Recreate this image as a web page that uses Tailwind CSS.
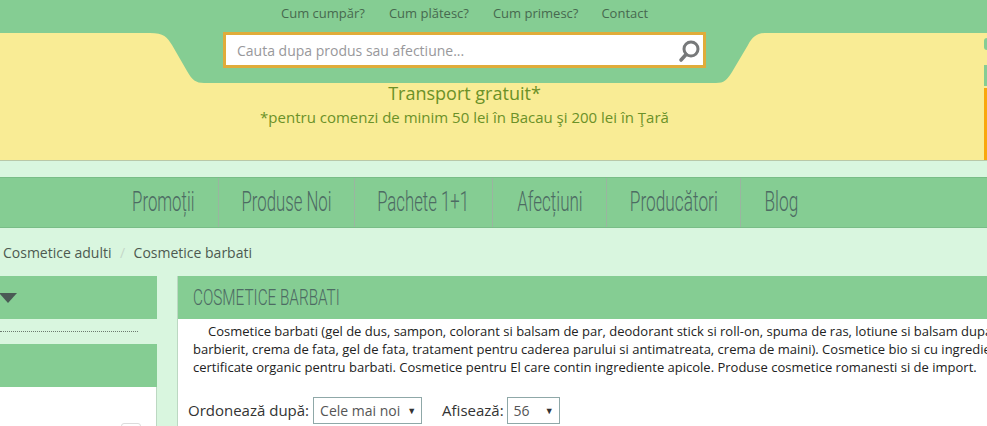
<!DOCTYPE html>
<html lang="en">
<head>
    <meta charset="UTF-8">
    <meta name="viewport" content="width=device-width, initial-scale=1.0">
    <title>Cosmetice barbati</title>
    <script src="https://cdn.jsdelivr.net/npm/@tailwindcss/browser@4"></script>
</head>
<body class="bg-[#d9f6df] h-[426px] w-[987px] overflow-hidden font-['Open_Sans',sans-serif] text-[14px] text-[#333]">
    <!-- Top links -->
    <div class="bg-[#85cd93] h-[33px] pt-[4px] pl-[281px] flex gap-[24px] text-[13px] leading-[18px] text-[#47694f]">
        <a href="#">Cum cumpăr?</a>
        <a href="#">Cum plătesc?</a>
        <a href="#">Cum primesc?</a>
        <a href="#" class="-ml-[1px]">Contact</a>
    </div>

    <!-- Yellow banner with search tab -->
    <div class="relative bg-[#f9ec95] h-[128px] border-b border-[#b9c8a8]">
        <svg class="absolute left-0 top-0" width="987" height="50" viewBox="0 0 987 50">
            <path d="M150 0 C164 0 167 4 172 12 L187 38 C192 47 196 50 204 50 L716 50 C724 50 727 47 732 39 L748 12 C753 3 757 0 767 0 Z" fill="#85cd93"/>
        </svg>
        <div class="absolute left-[984px] top-[5px] w-[3px] h-[12px] bg-[#85cd93] rounded-l-full"></div>
        <div class="absolute left-[984px] top-[32px] w-[3px] h-[21px] bg-[#85cd93]"></div>
        <div class="absolute left-[984px] top-[55px] w-[3px] h-[72px] bg-[#f9a70d]"></div>

        <div class="relative -top-[1px] ml-[223px] w-[483px] h-[36px] bg-white border-[3px] border-[#e0ac3a] flex items-center justify-between pl-[11px] pr-[2px]">
            <span class="text-[14px] text-[#98989b]">Cauta dupa produs sau afectiune...</span>
            <svg width="24" height="26" viewBox="0 0 24 26" fill="none" stroke="#77797a">
                <circle cx="14" cy="12" r="7" stroke-width="3"/>
                <path d="M9 17.5 L4 23" stroke-width="3.6" stroke-linecap="round"/>
            </svg>
        </div>
        <div class="relative mt-[12px] w-[929px] text-center text-[#6b9128]">
            <p class="text-[18px] leading-[25px]">Transport gratuit*</p>
            <p class="text-[15px] leading-[22px]">*pentru comenzi de minim 50 lei în Bacau şi 200 lei în Ţară</p>
        </div>
    </div>

    <!-- Main nav -->
    <nav class="mt-[16px] bg-[#85cd93] h-[51px] border-y border-[#79bd87] pl-[108px] flex font-['Roboto',sans-serif] font-light text-[27px] text-[#4d6b63] whitespace-nowrap">
        <a href="#" class="w-[111px] flex items-center justify-center border-r border-[#9ab5a0]"><span class="scale-x-[.62]">Promoții</span></a>
        <a href="#" class="w-[136px] flex items-center justify-center border-r border-[#9ab5a0]"><span class="scale-x-[.62]">Produse Noi</span></a>
        <a href="#" class="w-[138px] flex items-center justify-center border-r border-[#9ab5a0]"><span class="scale-x-[.62]">Pachete 1+1</span></a>
        <a href="#" class="w-[114px] flex items-center justify-center border-r border-[#9ab5a0]"><span class="scale-x-[.63]">Afecțiuni</span></a>
        <a href="#" class="w-[134px] flex items-center justify-center border-r border-[#9ab5a0]"><span class="scale-x-[.64]">Producători</span></a>
        <a href="#" class="w-[80px] flex items-center justify-center"><span class="scale-x-[.64]">Blog</span></a>
    </nav>

    <!-- Breadcrumb -->
    <div class="h-[48px] pl-[3px] flex items-center gap-[8.5px] text-[14px] text-[#4d5a50]">
        <span>Cosmetice adulti</span>
        <span class="text-[#c5d6c8]">/</span>
        <span>Cosmetice barbati</span>
    </div>

    <div class="flex gap-[20px] items-start">
        <!-- Sidebar -->
        <aside class="w-[157px] shrink-0">
            <div class="h-[43px] bg-[#85cd93] flex items-center">
                <div class="w-0 h-0 border-x-[9px] border-x-transparent border-t-[10px] border-t-[#4a5a55] -ml-[1px]"></div>
            </div>
            <div class="mt-[12px] w-[138px] border-t border-dotted border-[#6c7a70]"></div>
            <div class="mt-[12px] h-[43px] bg-[#85cd93]"></div>
            <div class="relative h-[40px] bg-white border-r border-[#bcd8c2]">
                <div class="absolute left-[121px] top-[36px] w-[20px] h-[20px] bg-white border border-[#dcdcdc] rounded-[3px]"></div>
            </div>
        </aside>

        <!-- Main panel -->
        <main class="w-[830px] h-[150px] shrink-0 bg-white border-l border-[#bcd8c2] overflow-hidden">
            <h1 class="h-[43px] bg-[#85cd93] pl-[15px] flex items-center font-['Roboto',sans-serif] font-light text-[22px] text-[#4d6b63] whitespace-nowrap"><span class="origin-left scale-x-[.695]">COSMETICE BARBATI</span></h1>
            <p class="pl-[15px] mt-[3px] text-[13px] leading-[18px] text-[#222] whitespace-nowrap indent-[15px]">Cosmetice barbati (gel de dus, sampon, colorant si balsam de par, deodorant stick si roll-on, spuma de ras, lotiune si balsam dupa<br>barbierit, crema de fata, gel de fata, tratament pentru caderea parului si antimatreata, crema de maini). Cosmetice bio si cu ingrediente<br>certificate organic pentru barbati. Cosmetice pentru El care contin ingrediente apicole. Produse cosmetice romanesti si de import.</p>
            <div class="mt-[21px] pl-[10px] flex items-center text-[15px] text-[#333]">
                <span class="mr-[4px]">Ordonează după:</span>
                <div class="w-[109px] h-[27px] border border-[#8fa8a8] pl-[6px] pr-[5px] flex items-center justify-between text-[14px] text-[#555]">
                    <span>Cele mai noi</span><span class="text-[9px] text-[#333]">▼</span>
                </div>
                <span class="ml-[20px] mr-[3px]">Afisează:</span>
                <div class="w-[53px] h-[27px] border border-[#8fa8a8] pl-[6px] pr-[5px] flex items-center justify-between text-[14px] text-[#555]">
                    <span>56</span><span class="text-[9px] text-[#333]">▼</span>
                </div>
            </div>
        </main>
    </div>
</body>
</html>
